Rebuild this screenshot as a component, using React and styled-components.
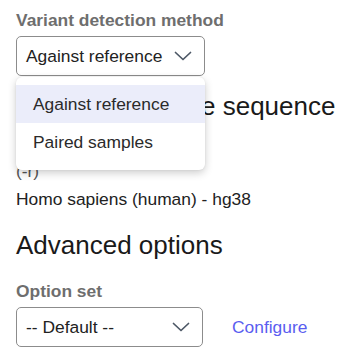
import React from "react";
import styled, { createGlobalStyle } from "styled-components";

const GlobalStyle = createGlobalStyle`
  body {
    margin: 0;
    background: #ffffff;
    font-family: "Liberation Sans", Arial, sans-serif;
    font-size: 17.4px;
    color: #222222;
  }
`;

const Page = styled.div`
  padding: 10px 16px 0 16px;
  display: flex;
  flex-direction: column;
  overflow: hidden;
`;

const Field = styled.div`
  position: relative;
  display: flex;
  flex-direction: column;
  align-items: flex-start;
  gap: 6px;
  margin-top: ${(p) => p.$top || 0}px;
`;

const Label = styled.div`
  font-weight: bold;
  color: #6e6e6e;
  line-height: 20px;
`;

const Row = styled.div`
  display: flex;
  align-items: center;
  gap: 29px;
`;

const SelectBox = styled.div`
  box-sizing: border-box;
  width: ${(p) => p.$width}px;
  height: 40px;
  border: 1px solid #8c8c8c;
  border-radius: 5px;
  padding: 0 12px 0 9px;
  display: flex;
  align-items: center;
  justify-content: space-between;
  color: #222222;
  line-height: 20px;
  background: #ffffff;
`;

const Menu = styled.div`
  position: absolute;
  z-index: 2;
  top: 67px;
  left: 0;
  width: 189px;
  box-sizing: border-box;
  padding: 8px 0 9px;
  background: #ffffff;
  border-radius: 6px;
  box-shadow: 0 3px 8px rgba(0, 0, 0, 0.2), 0 0 2px rgba(0, 0, 0, 0.08);
`;

const MenuItem = styled.div`
  height: 38px;
  box-sizing: border-box;
  padding: 9px 17px;
  line-height: 20px;
  color: #2a2a2a;
  background: ${(p) => (p.$active ? "#ebedfa" : "transparent")};
`;

const Heading = styled.h2`
  margin: ${(p) => p.$top}px 0 0 0;
  font-size: 26px;
  font-weight: normal;
  line-height: 30px;
  white-space: nowrap;
  color: #1a1a1a;
`;

const Hint = styled.div`
  line-height: 20px;
  color: #555555;
`;

const Value = styled.div`
  margin-top: 8px;
  line-height: 20px;
  color: #222222;
`;

const Link = styled.a`
  color: #5a5df0;
  text-decoration: none;
  line-height: 20px;
`;

const Chevron = () => (
  <svg width="18" height="10" viewBox="0 0 18 10" fill="none">
    <path
      d="M1.5 1.5 L9 8.5 L16.5 1.5"
      stroke="#4d5866"
      strokeWidth="1.7"
      strokeLinecap="round"
      strokeLinejoin="round"
    />
  </svg>
);

function App() {
  return (
    <Page>
      <GlobalStyle />
      <Field>
        <Label>Variant detection method</Label>
        <SelectBox $width={189}>
          <span>Against reference</span>
          <Chevron />
        </SelectBox>
        <Menu>
          <MenuItem $active>Against reference</MenuItem>
          <MenuItem>Paired samples</MenuItem>
        </Menu>
      </Field>

      <Heading $top={15}>Select Reference sequence</Heading>
      <Field $top={20}>
        <Label>Reference genome</Label>
      </Field>
      <Hint>(-r)</Hint>
      <Value>Homo sapiens (human) - hg38</Value>

      <Heading $top={21}>Advanced options</Heading>
      <Field $top={21}>
        <Label>Option set</Label>
        <Row>
          <SelectBox $width={187}>
            <span>-- Default --</span>
            <Chevron />
          </SelectBox>
          <Link href="#">Configure</Link>
        </Row>
      </Field>
    </Page>
  );
}

export default App;
